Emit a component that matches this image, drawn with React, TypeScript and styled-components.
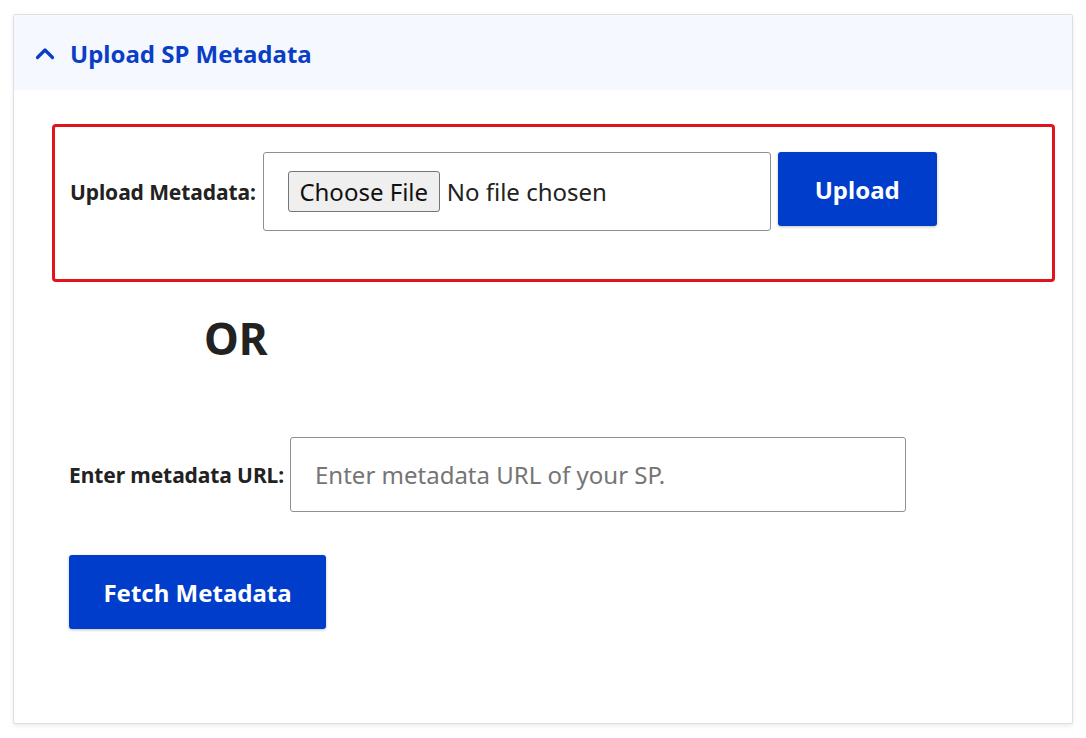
import React from "react";
import styled, { createGlobalStyle } from "styled-components";

const Global = createGlobalStyle`
  html, body { margin: 0; padding: 0; background: #ffffff; }
  body { font-family: "Noto Sans", "Open Sans", Arial, sans-serif; color: #222; }
  * { box-sizing: border-box; }
`;

const Page = styled.div`
  padding: 14px 13px 14px 13px;
  width: 1086px;
`;

const Card = styled.section`
  width: 1060px;
  height: 710px;
  border: 1px solid #dddfe3;
  border-radius: 2px;
  box-shadow: 0 2px 4px rgba(0, 0, 0, 0.08);
  background: #fff;
  display: flex;
  flex-direction: column;
`;

const Header = styled.header`
  height: 75px;
  background: #f5f8fe;
  display: flex;
  align-items: center;
  gap: 15px;
  padding-left: 21px;
  padding-top: 1px;
`;

const Title = styled.h2`
  margin: 0;
  font-size: 24px;
  font-weight: 700;
  color: #0a3ec6;
`;

const Body = styled.div`
  padding: 34px 17px 0 38px;
  display: flex;
  flex-direction: column;
`;

const UploadBox = styled.div`
  border: 3px solid #e3131b;
  border-radius: 4px;
  height: 158px;
  padding: 25px 0 0 15px;
`;

const Row = styled.div<{ $gap?: number }>`
  display: flex;
  align-items: flex-start;
  gap: ${(p) => p.$gap ?? 7}px;
`;

const Label = styled.label<{ $h: number }>`
  height: ${(p) => p.$h}px;
  display: flex;
  align-items: center;
  font-size: 21px;
  font-weight: 700;
  color: #222;
  white-space: nowrap;
  letter-spacing: -0.1px;
`;

const FileBox = styled.div`
  width: 508px;
  height: 79px;
  border: 1px solid #8f8f8f;
  border-radius: 3px;
  display: flex;
  align-items: center;
  padding-left: 24px;
  gap: 7px;
`;

const ChooseButton = styled.button`
  height: 41px;
  width: 152px;
  padding: 0;
  border: 1px solid #767676;
  border-radius: 3px;
  background: #efefef;
  font-family: inherit;
  font-size: 24px;
  color: #111;
  line-height: 1;
`;

const FileText = styled.span`
  font-size: 24px;
  color: #222;
`;

const PrimaryButton = styled.button<{ $w: number }>`
  width: ${(p) => p.$w}px;
  height: 74px;
  border: none;
  border-radius: 3px;
  background: #003dcb;
  color: #fff;
  font-family: inherit;
  font-size: 24px;
  font-weight: 700;
  box-shadow: 0 1px 3px rgba(0, 0, 0, 0.25);
  padding: 0;
`;

const Or = styled.div`
  margin: 30px 0 0 152px;
  font-size: 44px;
  font-weight: 700;
  color: #222;
  line-height: 52px;
`;

const UrlSection = styled.div`
  margin-top: 73px;
  padding-left: 17px;
  display: flex;
  flex-direction: column;
  gap: 43px;
`;

const UrlInput = styled.input`
  width: 616px;
  height: 75px;
  border: 1px solid #8f8f8f;
  border-radius: 3px;
  padding: 0 0 0 24px;
  font-family: inherit;
  font-size: 24px;
  color: #222;
  &::placeholder { color: #757575; }
`;

const Chevron = () => (
  <svg width="20" height="14" viewBox="0 0 20 14" fill="none">
    <path d="M2.5 11.5 L10 4 L17.5 11.5" stroke="#0a3ec6" strokeWidth="3.2" strokeLinecap="round" strokeLinejoin="round" />
  </svg>
);

export default function App() {
  return (
    <>
      <Global />
      <Page>
        <Card>
          <Header>
            <Chevron />
            <Title>Upload SP Metadata</Title>
          </Header>
          <Body>
            <UploadBox>
              <Row $gap={7}>
                <Label $h={79}>Upload Metadata:</Label>
                <FileBox>
                  <ChooseButton>Choose File</ChooseButton>
                  <FileText>No file chosen</FileText>
                </FileBox>
                <PrimaryButton $w={159}>Upload</PrimaryButton>
              </Row>
            </UploadBox>
            <Or>OR</Or>
            <UrlSection>
              <Row $gap={6}>
                <Label $h={75}>Enter metadata URL:</Label>
                <UrlInput placeholder="Enter metadata URL of your SP." />
              </Row>
              <PrimaryButton $w={257}>Fetch Metadata</PrimaryButton>
            </UrlSection>
          </Body>
        </Card>
      </Page>
    </>
  );
}
